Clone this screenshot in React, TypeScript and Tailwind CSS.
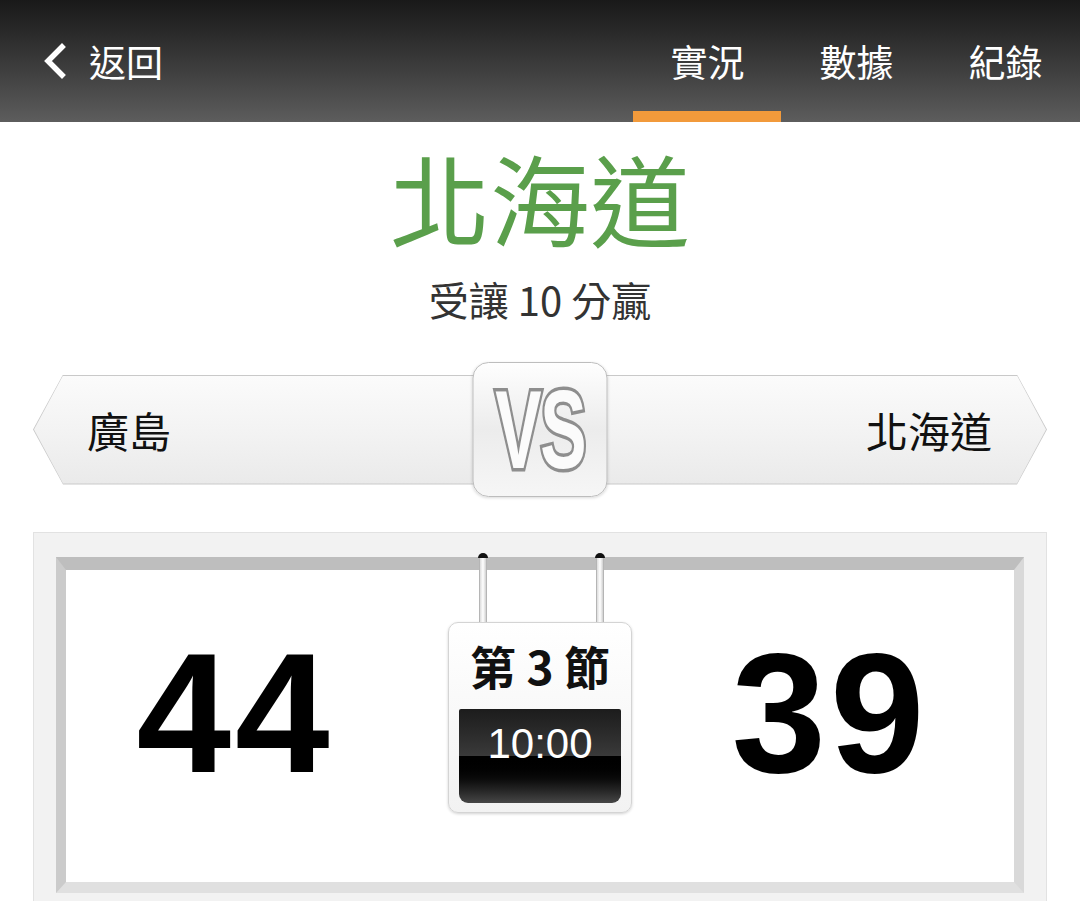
import React from 'react';

const cjk = "font-['Noto_Sans_CJK_TC','Noto_Sans_CJK_SC',sans-serif]";
const latin = "font-['Liberation_Sans','Helvetica',sans-serif]";

const tabs = [
  { label: '實況', active: true },
  { label: '數據', active: false },
  { label: '紀錄', active: false },
];

function BackChevron() {
  return (
    <svg width="24" height="36" viewBox="0 0 24 36" className="shrink-0">
      <polyline points="19,4 5,18 19,32" fill="none" stroke="#ffffff" strokeWidth="5.5" strokeLinecap="square" strokeLinejoin="miter" />
    </svg>
  );
}

function Header() {
  return (
    <header className={`flex h-[122px] items-stretch bg-gradient-to-b from-[#191919] to-[#5d5d5d] text-white ${cjk}`}>
      <button className="flex items-center gap-[22px] pl-[43px]">
        <BackChevron />
        <span className="text-[37px] leading-none">返回</span>
      </button>
      <nav className="ml-auto flex">
        {tabs.map((t) => (
          <div key={t.label} className="relative flex w-[149px] items-center justify-center">
            <span className="text-[37px] leading-none">{t.label}</span>
            {t.active && <div className="absolute bottom-0 left-0 h-[11px] w-[148px] bg-[#f29a3b]" />}
          </div>
        ))}
      </nav>
    </header>
  );
}

function Matchup() {
  const arrow =
    '[clip-path:polygon(0_50%,30px_0,calc(100%-30px)_0,100%_50%,calc(100%-30px)_100%,30px_100%)]';
  const arrowInner =
    '[clip-path:polygon(0_50%,29px_0,calc(100%-29px)_0,100%_50%,calc(100%-29px)_100%,29px_100%)]';
  return (
    <div className="relative mx-[33px] mt-[43px] flex h-[135px] items-center">
      <div className={`h-[110px] w-full bg-[#c9c9c9] p-px ${arrow}`}>
        <div className={`flex h-full w-full items-center justify-between bg-gradient-to-b from-[#fbfbfb] via-[#f3f3f3] to-[#eaeaea] pl-[53px] pr-[54px] ${arrowInner} ${cjk}`}>
          <span className="text-[42px] leading-none text-[#111]">廣島</span>
          <span className="text-[42px] leading-none text-[#111]">北海道</span>
        </div>
      </div>
      <div className="absolute left-1/2 top-0 flex h-[135px] w-[135px] -translate-x-1/2 items-center justify-center overflow-hidden rounded-[16px] border border-[#bdbdbd] bg-gradient-to-b from-[#fefefe] via-[#ececec] to-[#f6f6f6] shadow-[0_1px_3px_rgba(0,0,0,0.15)]">
        <span
          className={`scale-x-[0.62] text-[112px] font-bold leading-none tracking-[-2px] text-[#fbfbfb] [paint-order:stroke_fill] [-webkit-text-stroke:7px_#8e8e8e] ${latin}`}
        >
          VS
        </span>
      </div>
    </div>
  );
}

function Rod() {
  return (
    <div className="flex w-[10px] flex-col items-center">
      <div className="h-[5px] w-[10px] rounded-t-full bg-[#111]" />
      <div className="h-[64px] w-[8px] border-x border-[#b5b5b5] bg-gradient-to-r from-[#dcdcdc] via-[#ffffff] to-[#d0d0d0]" />
    </div>
  );
}

function ClockSign() {
  return (
    <div className="relative mt-[52px] w-[184px]">
      <div className="absolute -top-[69px] left-[30px] flex w-[127px] justify-between">
        <Rod />
        <Rod />
      </div>
      <div className="flex h-[191px] flex-col items-center rounded-[10px] border border-[#d4d4d4] bg-gradient-to-b from-[#ffffff] to-[#f2f2f2] px-[10px] shadow-[0_1px_3px_rgba(0,0,0,0.18)]">
        <div className={`mt-[19px] text-[46px] font-bold leading-none text-[#111] ${cjk}`}>第 3 節</div>
        <div className="mt-[21px] flex h-[94px] w-full flex-col overflow-hidden rounded-b-[9px] rounded-t-[2px]">
          <div className="flex h-[47px] items-end justify-center bg-gradient-to-b from-[#1c1c1c] to-[#3a3a3a]">
            <span className={`translate-y-[9px] text-[42px] leading-none text-white ${latin}`}>10:00</span>
          </div>
          <div className="h-[47px] bg-gradient-to-b from-[#000000] via-[#0c0c0c] to-[#474747]" />
        </div>
      </div>
    </div>
  );
}

function Scoreboard() {
  return (
    <div className="mx-[33px] mt-[35px] border border-[#e2e2e2] bg-[#f2f2f2] px-[22px] pb-[12px] pt-[24px]">
      <div className="border-b-[11px] border-l-[10px] border-r-[10px] border-t-[13px] border-b-[#e0e0e0] border-l-[#cbcbcb] border-r-[#d9d9d9] border-t-[#bebebe] bg-white">
        <div className="flex h-[312px] items-start">
          <div className={`mt-[58px] w-[338px] text-center text-[170px] font-bold leading-none tracking-[4px] text-black ${latin}`}>
            44
          </div>
          <div className="ml-[44px]">
            <ClockSign />
          </div>
          <div className={`ml-[18px] mt-[58px] w-[360px] text-center text-[170px] font-bold leading-none tracking-[4px] text-black ${latin}`}>
            39
          </div>
        </div>
      </div>
    </div>
  );
}

export default function App() {
  return (
    <div className="min-h-screen w-full overflow-hidden bg-white">
      <Header />
      <main className="flex flex-col">
        <h1 className={`mt-[25px] text-center text-[100px] font-normal leading-none text-[#5a9f4b] ${cjk}`}>北海道</h1>
        <p className={`mt-[32px] text-center text-[40px] leading-none text-[#333] ${cjk}`}>受讓 10 分贏</p>
        <Matchup />
        <Scoreboard />
      </main>
    </div>
  );
}
